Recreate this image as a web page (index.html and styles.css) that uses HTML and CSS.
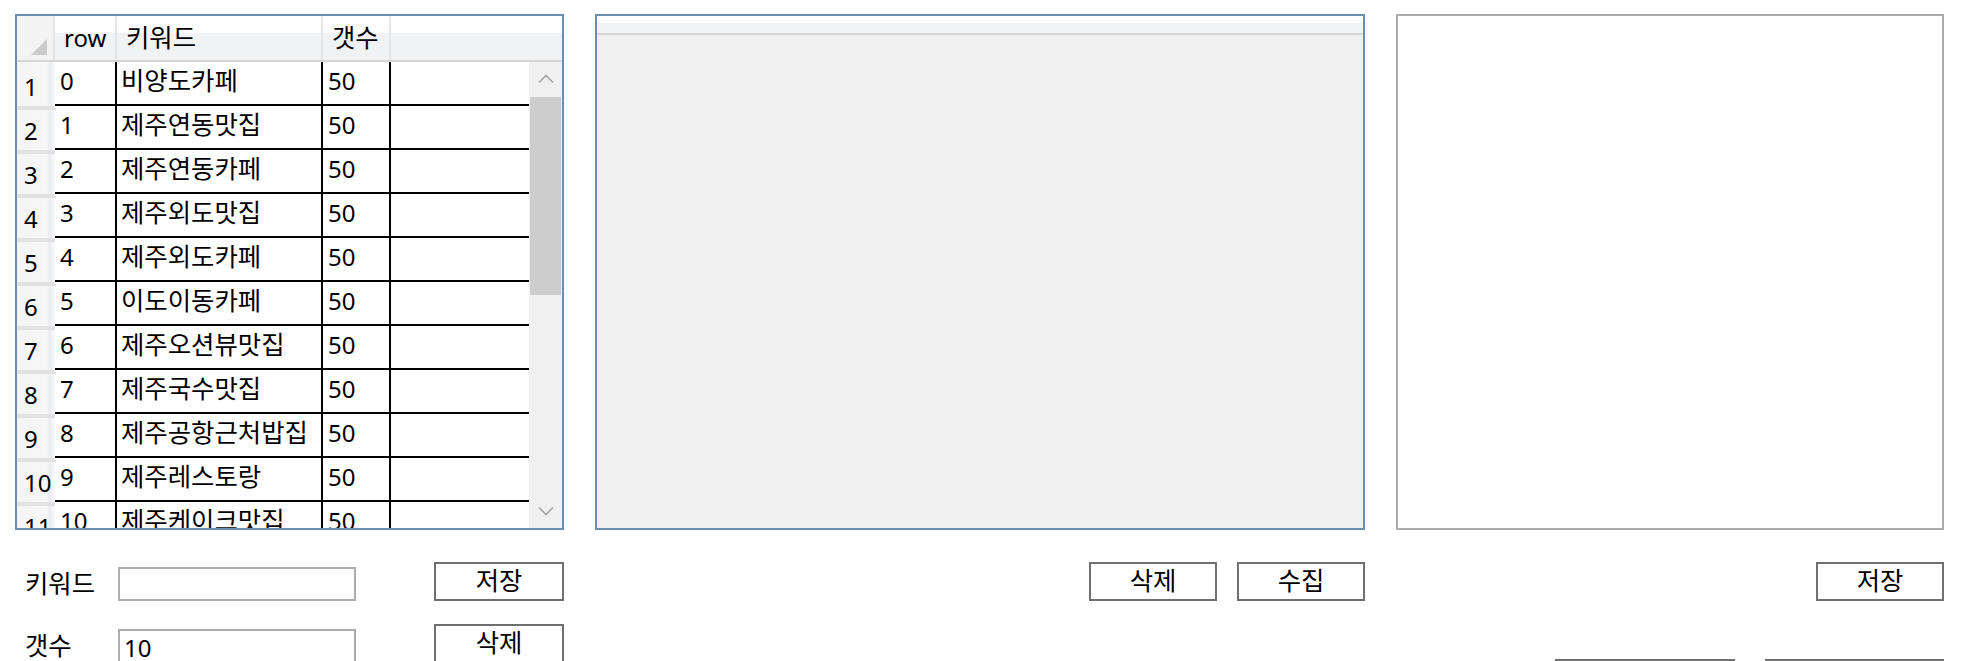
FILE: index.html
```html
<!DOCTYPE html>
<html lang="ko">
<head>
<meta charset="utf-8">
<title>키워드 수집</title>
<link rel="stylesheet" href="styles.css">
</head>
<body>
<div class="app">
  <section class="col col-grid">
    <div class="grid">
      <div class="grid-head">
        <div class="corner">
          <svg class="corner-tri" width="16" height="16" viewBox="0 0 16 16"><polygon points="16,0 16,16 0,16" fill="#cbcbcb"/></svg>
        </div>
        <div class="hcell c-row">row</div>
        <div class="hcell c-kw ko">키워드</div>
        <div class="hcell c-cnt ko">갯수</div>
        <div class="hcell c-fill"></div>
      </div>
      <div class="grid-body">
        <div class="rows">
          <div class="row first"><div class="rh">1</div><div class="cell c-row">0</div><div class="cell c-kw ko">비양도카페</div><div class="cell c-cnt">50</div><div class="cell c-fill"></div></div>
          <div class="row"><div class="rh">2</div><div class="cell c-row">1</div><div class="cell c-kw ko">제주연동맛집</div><div class="cell c-cnt">50</div><div class="cell c-fill"></div></div>
          <div class="row"><div class="rh">3</div><div class="cell c-row">2</div><div class="cell c-kw ko">제주연동카페</div><div class="cell c-cnt">50</div><div class="cell c-fill"></div></div>
          <div class="row"><div class="rh">4</div><div class="cell c-row">3</div><div class="cell c-kw ko">제주외도맛집</div><div class="cell c-cnt">50</div><div class="cell c-fill"></div></div>
          <div class="row"><div class="rh">5</div><div class="cell c-row">4</div><div class="cell c-kw ko">제주외도카페</div><div class="cell c-cnt">50</div><div class="cell c-fill"></div></div>
          <div class="row"><div class="rh">6</div><div class="cell c-row">5</div><div class="cell c-kw ko">이도이동카페</div><div class="cell c-cnt">50</div><div class="cell c-fill"></div></div>
          <div class="row"><div class="rh">7</div><div class="cell c-row">6</div><div class="cell c-kw ko">제주오션뷰맛집</div><div class="cell c-cnt">50</div><div class="cell c-fill"></div></div>
          <div class="row"><div class="rh">8</div><div class="cell c-row">7</div><div class="cell c-kw ko">제주국수맛집</div><div class="cell c-cnt">50</div><div class="cell c-fill"></div></div>
          <div class="row"><div class="rh">9</div><div class="cell c-row">8</div><div class="cell c-kw ko">제주공항근처밥집</div><div class="cell c-cnt">50</div><div class="cell c-fill"></div></div>
          <div class="row"><div class="rh">10</div><div class="cell c-row">9</div><div class="cell c-kw ko">제주레스토랑</div><div class="cell c-cnt">50</div><div class="cell c-fill"></div></div>
          <div class="row"><div class="rh">11</div><div class="cell c-row">10</div><div class="cell c-kw ko">제주케이크맛집</div><div class="cell c-cnt">50</div><div class="cell c-fill"></div></div>
        </div>
        <div class="vscroll">
          <div class="sb-btn">
            <svg width="16" height="10" viewBox="0 0 16 10"><polyline points="1,8.5 8,1.5 15,8.5" fill="none" stroke="#a6a6a6" stroke-width="1.6"/></svg>
          </div>
          <div class="sb-track"><div class="sb-thumb"></div></div>
          <div class="sb-btn">
            <svg width="16" height="10" viewBox="0 0 16 10"><polyline points="1,1.5 8,8.5 15,1.5" fill="none" stroke="#a6a6a6" stroke-width="1.6"/></svg>
          </div>
        </div>
      </div>
    </div>
    <div class="form">
      <div class="form-row">
        <label class="lbl ko" for="kw">키워드</label>
        <input class="tb" id="kw" type="text" value="">
        <button class="btn btn-side ko" type="button">저장</button>
      </div>
      <div class="form-row">
        <label class="lbl ko" for="cnt">갯수</label>
        <input class="tb" id="cnt" type="text" value="10">
        <button class="btn btn-side ko" type="button">삭제</button>
      </div>
    </div>
  </section>

  <section class="col col-list">
    <div class="list">
      <div class="list-head"></div>
    </div>
    <div class="actions">
      <button class="btn ko" type="button">삭제</button>
      <button class="btn ko" type="button">수집</button>
    </div>
  </section>

  <section class="col col-box">
    <div class="box"></div>
    <div class="actions">
      <button class="btn ko" type="button">저장</button>
    </div>
    <div class="actions actions-low">
      <button class="btn btn-wide" type="button"></button>
      <button class="btn btn-wide2" type="button"></button>
    </div>
  </section>
</div>
</body>
</html>
```

FILE: styles.css
```css
html, body {
  margin: 0;
  padding: 0;
  width: 1969px;
  height: 661px;
  overflow: hidden;
  background: #ffffff;
}

body {
  font-family: "Noto Sans", "Noto Sans CJK KR", sans-serif;
  font-size: 24px;
  color: #000;
}

* {
  box-sizing: border-box;
}

/* Hangul runs a touch larger, like Malgun Gothic */
.ko {
  font-size: 25.4px;
}

.app {
  display: flex;
  align-items: flex-start;
  gap: 31px;
  padding: 14px 0 0 15px;
}

.col {
  display: flex;
  flex-direction: column;
}

.col-grid { width: 549px; }
.col-list { width: 770px; }
.col-box { width: 548px; }

/* ---------- data grid ---------- */
.grid {
  width: 549px;
  height: 516px;
  border: 2px solid #6d8db5;
  display: flex;
  flex-direction: column;
  overflow: hidden;
  background: #fff;
}

.grid-head {
  height: 46px;
  flex: none;
  display: flex;
  border-bottom: 2px solid #d5d5d5;
  background: linear-gradient(#ffffff 0, #fdfdfd 39%, #f1f2f4 39%, #f1f2f4 100%);
}

.corner {
  width: 38px;
  flex: none;
  display: flex;
  align-items: flex-end;
  justify-content: flex-end;
  padding: 0 6px 5px 0;
  border-right: 2px solid #e4e5e7;
  background: #f3f3f3;
}

.corner-tri { display: block; }

.hcell {
  height: 100%;
  display: flex;
  align-items: center;
  padding-left: 9px;
  line-height: 1;
  border-right: 2px solid #e4e5e7;
  white-space: nowrap;
}

.hcell.c-fill { border-right: 0; }

.c-row { width: 62px; flex: none; }
.c-kw { width: 206px; flex: none; }
.c-cnt { width: 68px; flex: none; }
.c-fill { flex: 1; }

.grid-body {
  flex: 1;
  display: flex;
  min-height: 0;
}

.rows {
  flex: 1;
  overflow: hidden;
}

.row {
  display: flex;
  height: 44px;
}

.rh {
  width: 38px;
  flex: none;
  padding: 5px 0 0 7px;
  display: flex;
  align-items: center;
  line-height: 1;
  background:
    linear-gradient(#e2e2e2, #e2e2e2) top / 100% 4px no-repeat,
    linear-gradient(to right, #f4f4f4 0%, #f7f7f7 78%, #e9ebee 86%, #fbfbfb 100%);
}

.row.first .rh {
  background: linear-gradient(to right, #f4f4f4 0%, #f7f7f7 78%, #e9ebee 86%, #fbfbfb 100%);
}

.cell {
  height: 44px;
  display: flex;
  align-items: center;
  padding: 0 0 4px 5px;
  line-height: 1;
  white-space: nowrap;
  overflow: hidden;
  border-bottom: 2px solid #000;
}

.cell.c-kw {
  padding-left: 4px;
}

.cell.c-row,
.cell.c-kw,
.cell.c-cnt {
  border-right: 2px solid #000;
}

.vscroll {
  width: 33px;
  flex: none;
  display: flex;
  flex-direction: column;
  background: #f0f0f0;
}

.sb-btn {
  height: 34px;
  flex: none;
  display: flex;
  align-items: center;
  justify-content: center;
}

.sb-btn svg { display: block; }

.sb-track {
  flex: 1;
  padding: 1px 1px 0 1px;
}

.sb-thumb {
  height: 198px;
  background: #cdcdcd;
}

/* ---------- form ---------- */
.form {
  margin-top: 32px;
  display: flex;
  flex-direction: column;
  gap: 23px;
}

.form-row {
  display: flex;
  align-items: flex-end;
  height: 39px;
}

.lbl {
  width: 103px;
  height: 34px;
  padding-left: 10px;
  display: flex;
  align-items: center;
  line-height: 1;
}

.tb {
  width: 238px;
  height: 34px;
  border: 2px solid #adadad;
  padding: 3px 4px 0 4px;
  margin: 0;
  font: inherit;
  line-height: 1;
  color: #000;
  background: #fff;
  outline: none;
}

.btn {
  width: 128px;
  height: 39px;
  flex: none;
  margin: 0;
  padding: 0 0 2px 0;
  border: 2px solid #707070;
  border-radius: 0;
  background: #ffffff;
  font-family: inherit;
  line-height: 1;
  color: #000;
}

.btn-side {
  width: 130px;
  margin-left: auto;
}

/* ---------- list panel ---------- */
.list {
  width: 770px;
  height: 516px;
  border: 2px solid #6d8db5;
  background: #f0f0f0;
}

.list-head {
  height: 19px;
  border-bottom: 2px solid #d5d5d5;
  background: linear-gradient(#ffffff 0, #fcfcfc 40%, #f2f3f5 40%, #f2f3f5 100%);
}

.actions {
  margin-top: 32px;
  display: flex;
  justify-content: flex-end;
  gap: 20px;
}

/* ---------- right panel ---------- */
.box {
  width: 548px;
  height: 516px;
  border: 2px solid #ababab;
  background: #fff;
}

.actions-low {
  margin-top: 58px;
  gap: 30px;
}

.btn-wide { width: 180px; }
.btn-wide2 { width: 179px; }
```
